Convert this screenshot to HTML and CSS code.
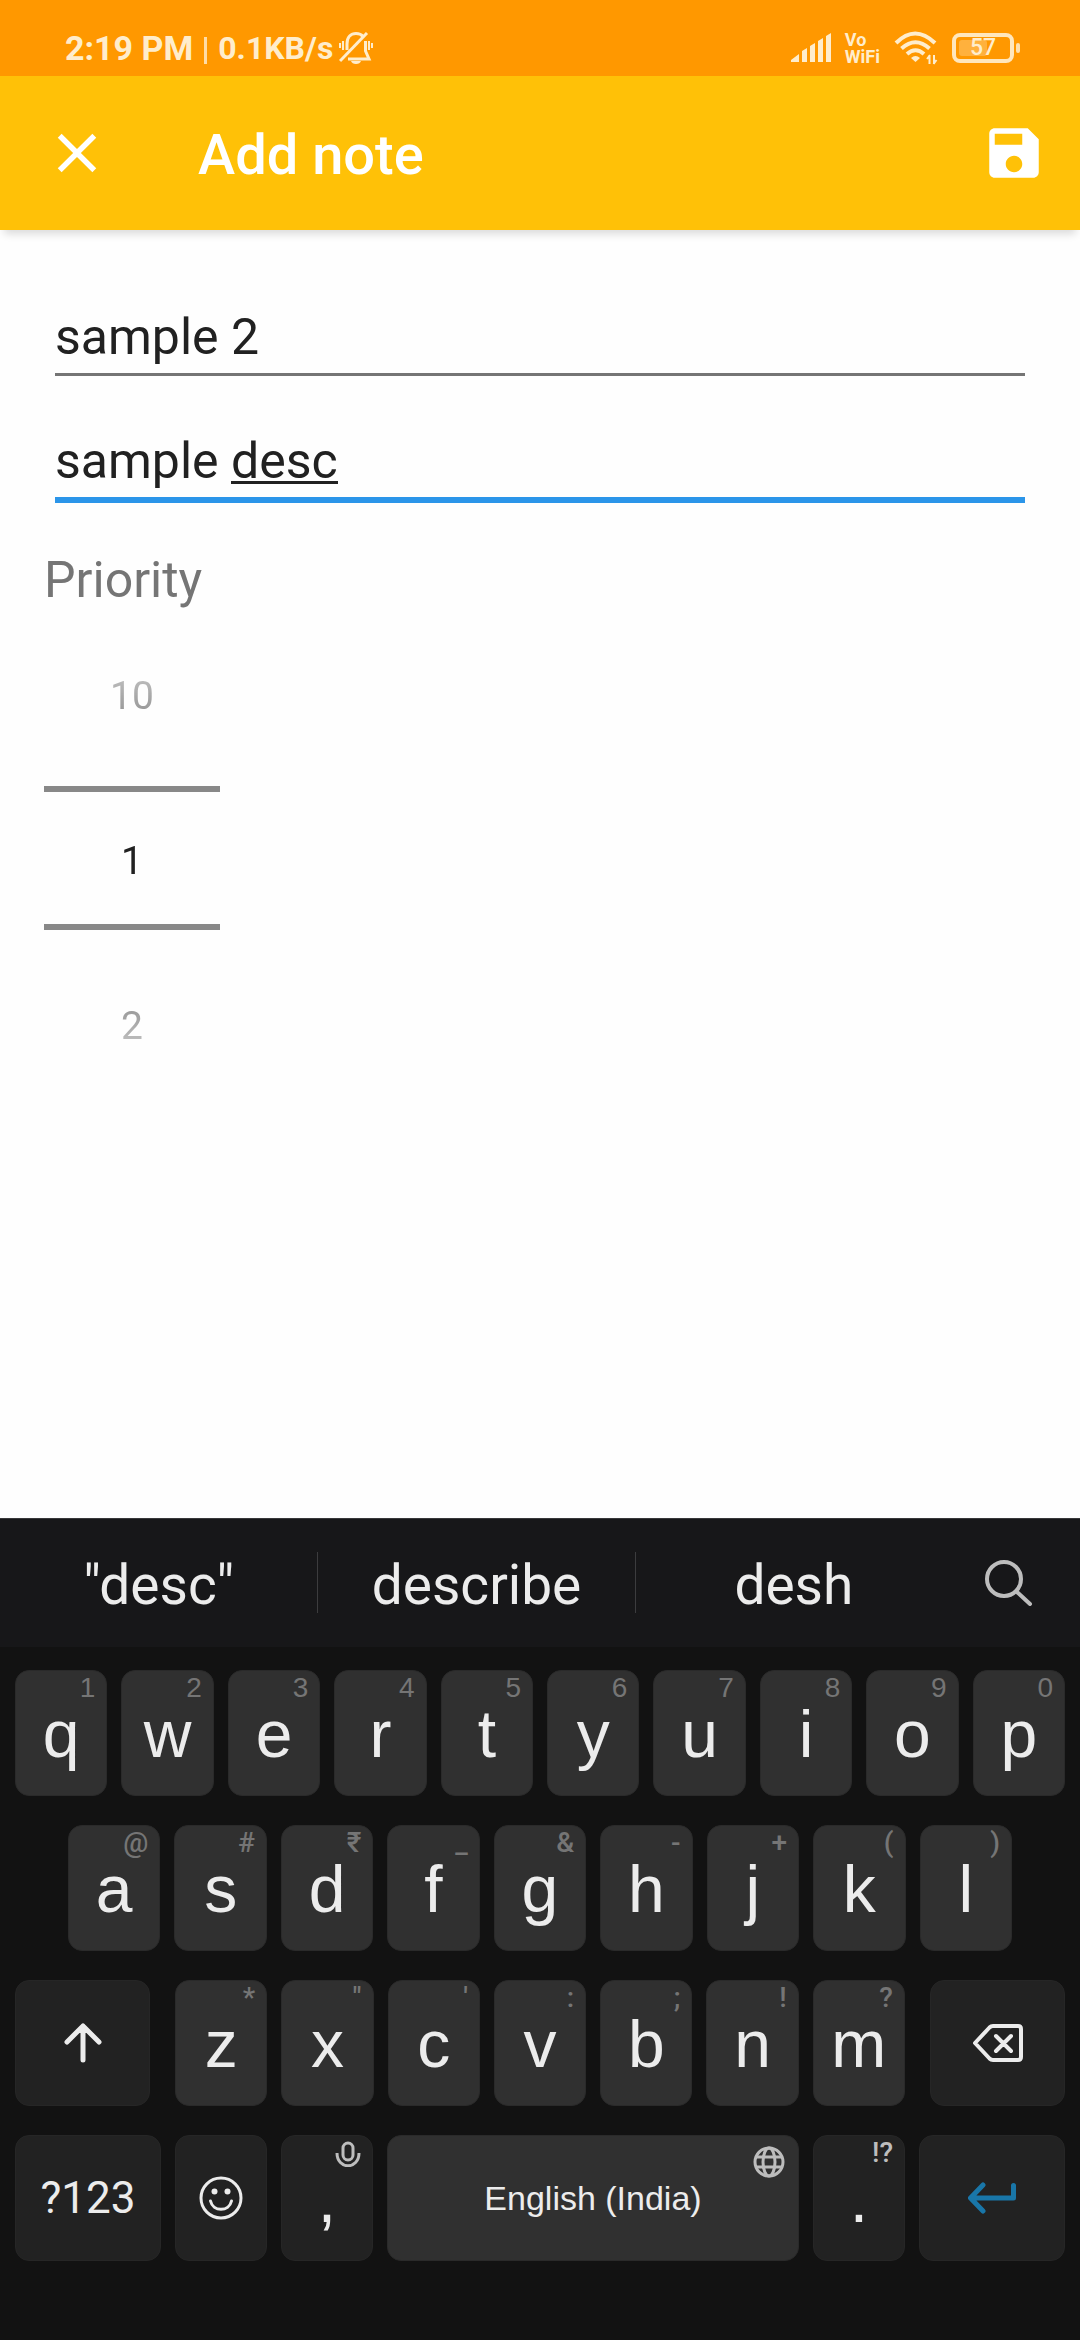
FILE: index.html
```html
<!DOCTYPE html>
<html lang="en">
<head>
<meta charset="utf-8">
<meta name="viewport" content="width=device-width, initial-scale=1">
<title>Add note</title>
<link rel="stylesheet" href="styles.css">
</head>
<body>
<div class="status">
  <span class="status-time">2:19 PM</span>
  <span class="status-divider"></span>
  <span class="status-speed">0.1KB/s</span>
  <svg class="status-bell" viewBox="0 0 34 32" width="34" height="32" fill="none" stroke="currentColor" stroke-width="3">
    <path d="M8 18V12C8 5 12 1.500 17 1.500C20 1.500 22.500 2.500 24 4.500M26.500 9V19L30 27H9"/>
    <path d="M1 29L28 1"/>
    <path d="M12 29h10q-1 3-5 3t-5-3z" fill="currentColor" stroke="none"/>
    <path d="M4 9v9M1 11v5M30 9v9M33 11v5" stroke-width="2"/>
  </svg>
  <div class="status-right">
    <svg viewBox="0 0 40 30" width="40" height="30" fill="currentColor">
      <path d="M0 29v-2l8-6v8zM11 29V18l5-3v14zM19 29V13l5-3v19zM27 29V8l5-3v24zM35 29V3l5-3v29z"/>
    </svg>
    <span class="status-vowifi"><span>Vo</span><span>WiFi</span></span>
    <svg viewBox="0 0 44 34" width="44" height="34" fill="none" stroke="currentColor" stroke-width="4">
      <path d="M2 12Q21 -7 41 12"/>
      <path d="M7.500 17.500Q21.500 5 35.500 17.500"/>
      <path d="M13 23Q21.500 15.500 30 23"/>
      <path d="M17 27Q21.500 23 26 27L21.500 31z" fill="currentColor" stroke="none"/>
      <path d="M35.500 24v9M40 24v9M33 28l3-4M42.500 29l-3 4" stroke-width="2"/>
    </svg>
    <span class="battery"><span class="battery-body"><span class="battery-fill"></span><span class="battery-text">57</span></span><span class="battery-cap"></span></span>
  </div>
</div>

<header class="appbar">
  <button class="icon-button" type="button" aria-label="Close">
    <svg viewBox="0 0 24 24" width="66" height="66" fill="currentColor"><path d="M19 6.410L17.590 5 12 10.590 6.410 5 5 6.410 10.590 12 5 17.590 6.410 19 12 13.410 17.590 19 19 17.590 13.410 12z"/></svg>
  </button>
  <h1 class="appbar-title">Add note</h1>
  <button class="icon-button" type="button" aria-label="Save">
    <svg viewBox="0 0 24 24" width="66" height="66" fill="currentColor"><path d="M17 3H5c-1.110 0-2 .9-2 2v14c0 1.100.89 2 2 2h14c1.100 0 2-.9 2-2V7l-4-4zm-5 16c-1.660 0-3-1.340-3-3s1.340-3 3-3 3 1.340 3 3-1.340 3-3 3zm3-10H5V5h10v4z"/></svg>
  </button>
</header>

<main class="form">
  <input class="field" type="text" aria-label="Title" value="sample 2">
  <input class="field field-active" type="text" aria-label="Description" value="sample desc">
  <label class="form-label" for="priority">Priority</label>
  <div class="picker">
    <button class="picker-step" type="button">10</button>
    <input class="picker-value" id="priority" type="text" inputmode="numeric" value="1">
    <button class="picker-step picker-next" type="button">2</button>
  </div>
</main>

<section class="keyboard" aria-label="Keyboard">
  <div class="suggestions">
    <button class="suggestion" type="button">"desc"</button>
    <button class="suggestion" type="button">describe</button>
    <button class="suggestion" type="button">desh</button>
    <button class="search" type="button" aria-label="Search">
      <svg viewBox="0 0 48 46" width="48" height="46" fill="none" stroke="currentColor" stroke-width="4" stroke-linecap="round"><circle cx="19" cy="19" r="17"/><path d="M32 32L45 44"/></svg>
    </button>
  </div>
  <div class="keys">
    <div class="row">
      <button class="key" type="button">q<span class="hint">1</span></button>
      <button class="key" type="button">w<span class="hint">2</span></button>
      <button class="key" type="button">e<span class="hint">3</span></button>
      <button class="key" type="button">r<span class="hint">4</span></button>
      <button class="key" type="button">t<span class="hint">5</span></button>
      <button class="key" type="button">y<span class="hint">6</span></button>
      <button class="key" type="button">u<span class="hint">7</span></button>
      <button class="key" type="button">i<span class="hint">8</span></button>
      <button class="key" type="button">o<span class="hint">9</span></button>
      <button class="key" type="button">p<span class="hint">0</span></button>
    </div>
    <div class="row row-home">
      <button class="key" type="button">a<span class="hint hint-symbol">@</span></button>
      <button class="key" type="button">s<span class="hint hint-symbol">#</span></button>
      <button class="key" type="button">d<span class="hint hint-symbol">₹</span></button>
      <button class="key" type="button">f<span class="hint hint-symbol">_</span></button>
      <button class="key" type="button">g<span class="hint hint-symbol">&amp;</span></button>
      <button class="key" type="button">h<span class="hint hint-symbol">-</span></button>
      <button class="key" type="button">j<span class="hint hint-symbol">+</span></button>
      <button class="key" type="button">k<span class="hint hint-symbol">(</span></button>
      <button class="key" type="button">l<span class="hint hint-symbol">)</span></button>
    </div>
    <div class="row row-shift">
      <button class="key key-dark" type="button" aria-label="Shift">
        <svg viewBox="0 0 38 40" width="38" height="40" fill="none" stroke="currentColor" stroke-width="5" stroke-linecap="round" stroke-linejoin="round"><path d="M19 37V3M3 19L19 3L35 19"/></svg>
      </button>
      <div class="row row-letters">
        <button class="key" type="button">z<span class="hint hint-symbol">*</span></button>
        <button class="key" type="button">x<span class="hint hint-symbol">"</span></button>
        <button class="key" type="button">c<span class="hint hint-symbol">'</span></button>
        <button class="key" type="button">v<span class="hint hint-symbol">:</span></button>
        <button class="key" type="button">b<span class="hint hint-symbol">;</span></button>
        <button class="key" type="button">n<span class="hint hint-symbol">!</span></button>
        <button class="key" type="button">m<span class="hint hint-symbol">?</span></button>
      </div>
      <button class="key key-dark" type="button" aria-label="Backspace">
        <svg viewBox="0 0 50 38" width="50" height="38" fill="none" stroke="currentColor" stroke-width="4" stroke-linecap="round" stroke-linejoin="round"><path d="M20 2H45Q48 2 48 5V33Q48 36 45 36H20Q18 36 16.500 34.500L2 19L16.500 3.500Q18 2 20 2zM23 12L38 27M38 12L23 27"/></svg>
      </button>
    </div>
    <div class="row row-space">
      <button class="key key-dark key-mode" type="button">?123</button>
      <button class="key key-dark" type="button" aria-label="Emoji">
        <svg viewBox="0 0 44 44" width="44" height="44" fill="none" stroke="currentColor" stroke-width="3" stroke-linecap="round"><circle cx="22" cy="22" r="20"/><path d="M11.500 25C14 36 30 36 32.500 25"/><g fill="currentColor" stroke="none"><circle cx="15.500" cy="15.500" r="3"/><circle cx="28.500" cy="15.500" r="3"/></g></svg>
      </button>
      <button class="key key-dark key-punct" type="button">,<span class="hint hint-light">
        <svg viewBox="0 0 26 26" width="26" height="26" fill="none" stroke="currentColor" stroke-width="3"><rect x="8" y="2" width="10" height="17" rx="5"/><path d="M2 12C2 29 24 29 24 12"/></svg></span>
      </button>
      <button class="key key-space" type="button">English (India)<span class="hint hint-light hint-globe">
        <svg viewBox="0 0 32 32" width="32" height="32" fill="none" stroke="currentColor" stroke-width="3"><circle cx="16" cy="16" r="14"/><ellipse cx="16" cy="16" rx="6" ry="14"/><path d="M3 11H29M3 21H29"/></svg></span>
      </button>
      <button class="key key-dark key-punct" type="button">.<span class="hint hint-symbol hint-light">!?</span></button>
      <button class="key key-dark key-enter" type="button" aria-label="Enter">
        <svg viewBox="0 0 48 32" width="48" height="32" fill="none" stroke="currentColor" stroke-width="5" stroke-linecap="round" stroke-linejoin="round"><path d="M45.500 3.500V16H3M15 3L2.500 16L15 29"/></svg>
      </button>
    </div>
  </div>
</section>
</body>
</html>
```
FILE: styles.css
```css
* {
  box-sizing: border-box;
}

body {
  margin: 0;
  min-height: 100vh;
  display: flex;
  flex-direction: column;
  background: #fefefe;
  color: #212121;
  font-family: Roboto, "Noto Sans", sans-serif;
}

button,
input {
  margin: 0;
  padding: 0;
  border: 0;
  border-radius: 0;
  outline: 0;
  background: none;
  color: inherit;
  font: inherit;
}

svg {
  display: block;
}

/* Status bar */
.status {
  height: 76px;
  padding: 20px 60px 0 65px;
  display: flex;
  align-items: center;
  background: #ff9800;
  color: #ffedcc;
  font-weight: 700;
}

.status-time {
  font-size: 34px;
}

.status-divider {
  width: 3px;
  height: 27px;
  margin: 4px 11px 0;
  background: #ffdca6;
}

.status-speed {
  font-size: 32px;
}

.status-bell {
  margin-left: 6px;
}

.status-right {
  margin-left: auto;
  display: flex;
  align-items: center;
  gap: 14px;
}

.status-vowifi {
  display: flex;
  flex-direction: column;
  font-size: 18px;
  line-height: 17px;
}

.battery {
  display: flex;
  align-items: center;
  gap: 2px;
}

.battery-body {
  width: 62px;
  height: 30px;
  display: grid;
  place-items: center;
  border: 4px solid #ffe7bd;
  border-radius: 8px;
}

.battery-body > * {
  grid-area: 1 / 1;
}

.battery-fill {
  width: 28px;
  height: 16px;
  margin-left: 3px;
  justify-self: start;
  border-radius: 3px;
  background: #ffb13d;
}

.battery-text {
  font-size: 23px;
  font-weight: 500;
  line-height: 22px;
}

.battery-cap {
  width: 4px;
  height: 10px;
  border-radius: 2px;
  background: #ffe0ad;
}

/* App bar */
.appbar {
  height: 154px;
  padding: 0 33px 0 44px;
  display: flex;
  align-items: center;
  background: #ffc107;
  color: #fff;
  box-shadow: 0 8px 8px -4px rgba(0, 0, 0, 0.14);
}

.icon-button {
  width: 66px;
  height: 66px;
}

.appbar-title {
  flex: 1;
  margin: 4px 0 0 88px;
  font-size: 56px;
  font-weight: 500;
}

/* Form */
.form {
  flex: 1;
  padding: 71px 44px 0;
  display: flex;
  flex-direction: column;
}

.field {
  height: 75px;
  margin: 0 11px;
  border-bottom: 3px solid #757575;
  font-size: 50px;
}

/* The word being composed is underlined inside the active field */
.field-active {
  height: 78px;
  margin-top: 49px;
  border-bottom: 6px solid #2b95e9;
  background: linear-gradient(#212121, #212121) 176px 56px / 107px 3px no-repeat;
}

.form-label {
  margin-top: 47px;
  color: #757575;
  font-size: 50px;
  line-height: 60px;
}

.picker {
  width: 176px;
  margin-top: 3px;
  display: flex;
  flex-direction: column;
  font-size: 39px;
  -webkit-mask-image: linear-gradient(transparent 1%, #000 35%, #000 65%, transparent 99%);
  mask-image: linear-gradient(transparent 1%, #000 35%, #000 65%, transparent 99%);
}

.picker-step {
  height: 173px;
  padding-bottom: 8px;
  color: #484848;
}

.picker-next {
  height: 176px;
  padding: 16px 0 0;
}

.picker-value {
  width: 100%;
  height: 144px;
  padding-top: 5px;
  border: solid #888;
  border-width: 6px 0;
  text-align: center;
}

/* Keyboard */
.keyboard {
  border-top: 1px solid #38383a;
  background: #121212;
  color: #ececec;
}

.suggestions {
  height: 128px;
  padding: 33px 0 34px;
  display: grid;
  grid-template-columns: 1fr 1fr 1fr 128px;
  background: #171719;
}

.suggestion {
  padding-top: 6px;
  font-size: 55px;
  line-height: 55px;
}

.suggestion + .suggestion {
  border-left: 1px solid #3c3c3e;
}

.search {
  padding-left: 33px;
  color: #bdbdbd;
}

.keys {
  padding: 23px 15px 79px;
  display: flex;
  flex-direction: column;
  gap: 29px;
  font-family: "Liberation Sans", Arial, sans-serif;
}

.row {
  display: flex;
  gap: 14px;
}

.row-home {
  padding: 0 53px;
}

.row-shift {
  display: grid;
  grid-template-columns: 135px 1fr 135px;
  gap: 25px;
}

.row-space {
  display: grid;
  grid-template-columns: 146px 92px 92px 1fr 92px 146px;
}

.key {
  position: relative;
  flex: 1;
  min-width: 0;
  height: 126px;
  padding-top: 2px;
  display: flex;
  align-items: center;
  justify-content: center;
  border: 1px solid #2a2a2a;
  border-radius: 14px;
  background: #303030;
  font-size: 66px;
}

.key-dark {
  padding-top: 0;
  border-color: #262626;
  background: #222;
}

.key-punct {
  padding-top: 2px;
}

.key-mode {
  font-family: Roboto, sans-serif;
  font-size: 44px;
}

.key-space {
  padding-top: 0;
  font-size: 34px;
}

.key-enter {
  color: #1976a8;
}

.hint {
  position: absolute;
  top: 1px;
  right: 11px;
  color: #757575;
  font-size: 28px;
  line-height: 32px;
}

.hint-symbol {
  font-family: Roboto, "Liberation Sans", sans-serif;
  font-weight: 500;
}

.hint-light {
  color: #bdbdbd;
}

.hint svg {
  margin-top: 4px;
}

.hint-globe {
  top: 6px;
  right: 13px;
}
```
